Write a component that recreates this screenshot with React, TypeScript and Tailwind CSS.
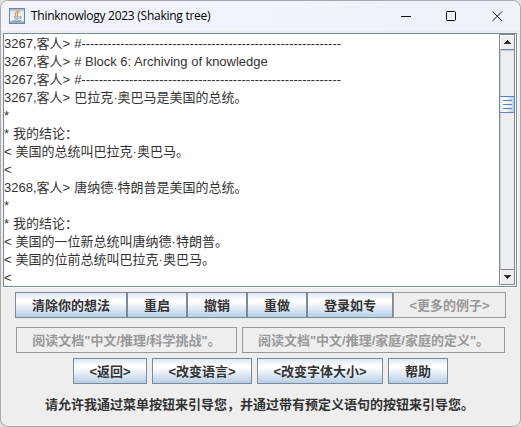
import React from "react";

const bold = "font-bold text-[13px]";
const dashes = "-".repeat(60);

function Line({ prompt, text, gap = "pl-[4px]" }: { prompt: string; text?: string; gap?: string }) {
  return (
    <div className="flex h-[18px] items-center whitespace-pre leading-[18px]">
      <span>{prompt}</span>
      {text && <span className={gap}>{text}</span>}
    </div>
  );
}

function Btn({ label, width, disabled = false, className = "" }: { label: string; width: string; disabled?: boolean; className?: string }) {
  const look = disabled
    ? "border-[#999999] text-[#999999]"
    : "border-[#7a8a99] text-[#333333] bg-[linear-gradient(#dde8f3_0%,#ffffff_30%,#ffffff_36%,#dde8f3_66%,#b8cfe5_100%)]";
  return (
    <button className={`flex h-[26px] shrink-0 items-center justify-center whitespace-pre border pt-[2px] leading-[18px] ${bold} ${look} ${width} ${className}`}>
      {label}
    </button>
  );
}

function JavaIcon() {
  return (
    <svg width="16" height="16" viewBox="0 0 16 16" fill="none">
      <defs>
        <linearGradient id="tile" x1="0" y1="0" x2="0" y2="1">
          <stop offset="0" stopColor="#8fa9be" />
          <stop offset="0.25" stopColor="#e6edf2" />
          <stop offset="0.75" stopColor="#f4f6f7" />
          <stop offset="1" stopColor="#7894aa" />
        </linearGradient>
      </defs>
      <rect x="0.5" y="0.5" width="15" height="15" fill="url(#tile)" stroke="#6888a2" />
      <path d="M9 1.800C9.800 4 5 4.500 6 6.200c.5.800 1 .900.900 1.800M10.500 4C8.500 4.800 7.800 5.500 8.500 6.400c.5.800.1 1.200-.4 1.700" stroke="#e8893a" strokeWidth="1.100" />
      <path d="M4.500 9h6M5.500 11h4M10.800 8.700c2.200-.6 2 1.600-.2 2.100M3.500 12.800c2 .700 6.500.700 8.500-.2" stroke="#5f7f9a" strokeWidth="0.900" />
    </svg>
  );
}

function Scrollbar() {
  return (
    <div className="flex h-[251px] w-[16px] shrink-0 flex-col border-x border-t border-[#7a8a99] bg-[#eeeeee]">
      <div className="flex h-[15px] items-center justify-center border-b border-l border-t border-b-[#7a8a99] border-l-white border-t-white">
        <svg width="9" height="5" viewBox="0 0 9 5" shapeRendering="crispEdges" fill="#333333"><path d="M4 0h1v1h1v1h1v1h1v1H1V3h1V2h1V1h1z" /></svg>
      </div>
      <div className="h-[46px] border-l border-t border-[#b8cfe5]" />
      <div className="-ml-px flex h-[17px] w-[16px] flex-col items-center justify-center gap-px border border-[#6382bf] bg-[linear-gradient(90deg,#dde8f3,#ffffff_32%,#dde8f3_64%,#b8cfe5)]">
        <div className="h-px w-[9px] bg-[#6382bf]" />
        <div className="h-px w-[9px] bg-white" />
        <div className="h-px w-[9px] bg-[#6382bf]" />
        <div className="h-px w-[9px] bg-white" />
        <div className="h-px w-[9px] bg-[#6382bf]" />
      </div>
      <div className="flex-1 border-l border-[#b8cfe5]" />
      <div className="flex h-[16px] items-center justify-center border-y border-l border-y-[#7a8a99] border-l-white">
        <svg width="9" height="5" viewBox="0 0 9 5" shapeRendering="crispEdges" fill="#333333"><path d="M1 0h7v1H7v1H6v1H5v1H4V3H3V2H2V1H1z" /></svg>
      </div>
    </div>
  );
}

export default function App() {
  return (
    <div className="h-[427px] w-[521px] overflow-hidden bg-[#dedede] font-['Liberation_Sans','Noto_Sans_CJK_SC',sans-serif] text-[#333333]">
      <div className="flex h-[427px] w-[521px] flex-col overflow-hidden rounded-[8px] border border-[#aaaaaa] bg-[#eeeeee]">
        <header className="flex h-[30px] shrink-0 items-center bg-[linear-gradient(90deg,#f1f3fb,#edf3f9)] pl-[8px]">
          <JavaIcon />
          <h1 className="ml-[6px] whitespace-nowrap font-['Open_Sans','Noto_Sans',sans-serif] text-[12px] leading-[16px] tracking-[-0.26px] text-black">Thinknowlogy 2023 (Shaking tree)</h1>
          <svg className="ml-auto mr-[17px]" width="102" height="11" viewBox="0 0 102 11" fill="none" stroke="#111111">
            <path d="M0 5.500h10" />
            <rect x="45.500" y="0.500" width="9" height="9" rx="1" />
            <path d="M91.500.500l9.500 9.500M101 .500l-9.500 9.500" />
          </svg>
        </header>
        <main className="ml-[2px] mt-[2px] flex h-[255px] w-[515px] shrink-0 border-b border-r border-white">
          <div className="flex h-[254px] w-[514px] border border-[#7a8a99] bg-white">
            <div className="min-w-0 flex-1 overflow-hidden pt-px text-[13px]">
              <Line prompt="3267,客人>" text={"#" + dashes} />
              <Line prompt="3267,客人>" text="# Block 6: Archiving of knowledge" />
              <Line prompt="3267,客人>" text={"#" + dashes} />
              <Line prompt="3267,客人>" text="巴拉克·奥巴马是美国的总统。" />
              <Line prompt="*" />
              <Line prompt="*" text="我的结论：" />
              <Line prompt="<" text="美国的总统叫巴拉克·奥巴马。" />
              <Line prompt="<" />
              <Line prompt="3268,客人>" text="唐纳德·特朗普是美国的总统。" />
              <Line prompt="*" />
              <Line prompt="*" text="我的结论：" />
              <Line prompt="<" text="美国的一位新总统叫唐纳德·特朗普。" />
              <Line prompt="<" text="美国的位前总统叫巴拉克·奥巴马。" />
              <Line prompt="<" />
            </div>
            <Scrollbar />
            <div className="w-px" />
          </div>
        </main>
        <div className="ml-[14px] mt-[4px] flex">
          <Btn label="清除你的想法" width="w-[112px]" />
          <Btn label="重启" width="w-[60px]" />
          <Btn label="撤销" width="w-[60px]" />
          <Btn label="重做" width="w-[60px]" />
          <Btn label="登录如专" width="w-[86px]" />
          <Btn label="<更多的例子>" width="w-[113px]" disabled />
        </div>
        <div className="ml-[15px] mt-[9px] flex gap-[5px]">
          <Btn label={'阅读文档"中文/推理/科学挑战"。'} width="w-[221px]" disabled />
          <Btn label={'阅读文档"中文/推理/家庭/家庭的定义"。'} width="w-[263px]" disabled />
        </div>
        <div className="ml-[72px] mt-[5px] flex gap-[5px]">
          <Btn label="<返回>" width="w-[74px]" />
          <Btn label="<改变语言>" width="w-[100px]" />
          <Btn label="<改变字体大小>" width="w-[126px]" />
          <Btn label="帮助" width="w-[60px]" />
        </div>
        <p className={`ml-[44px] mt-[12px] whitespace-nowrap leading-[18px] ${bold}`}>请允许我通过菜单按钮来引导您，并通过带有预定义语句的按钮来引导您。</p>
      </div>
    </div>
  );
}
